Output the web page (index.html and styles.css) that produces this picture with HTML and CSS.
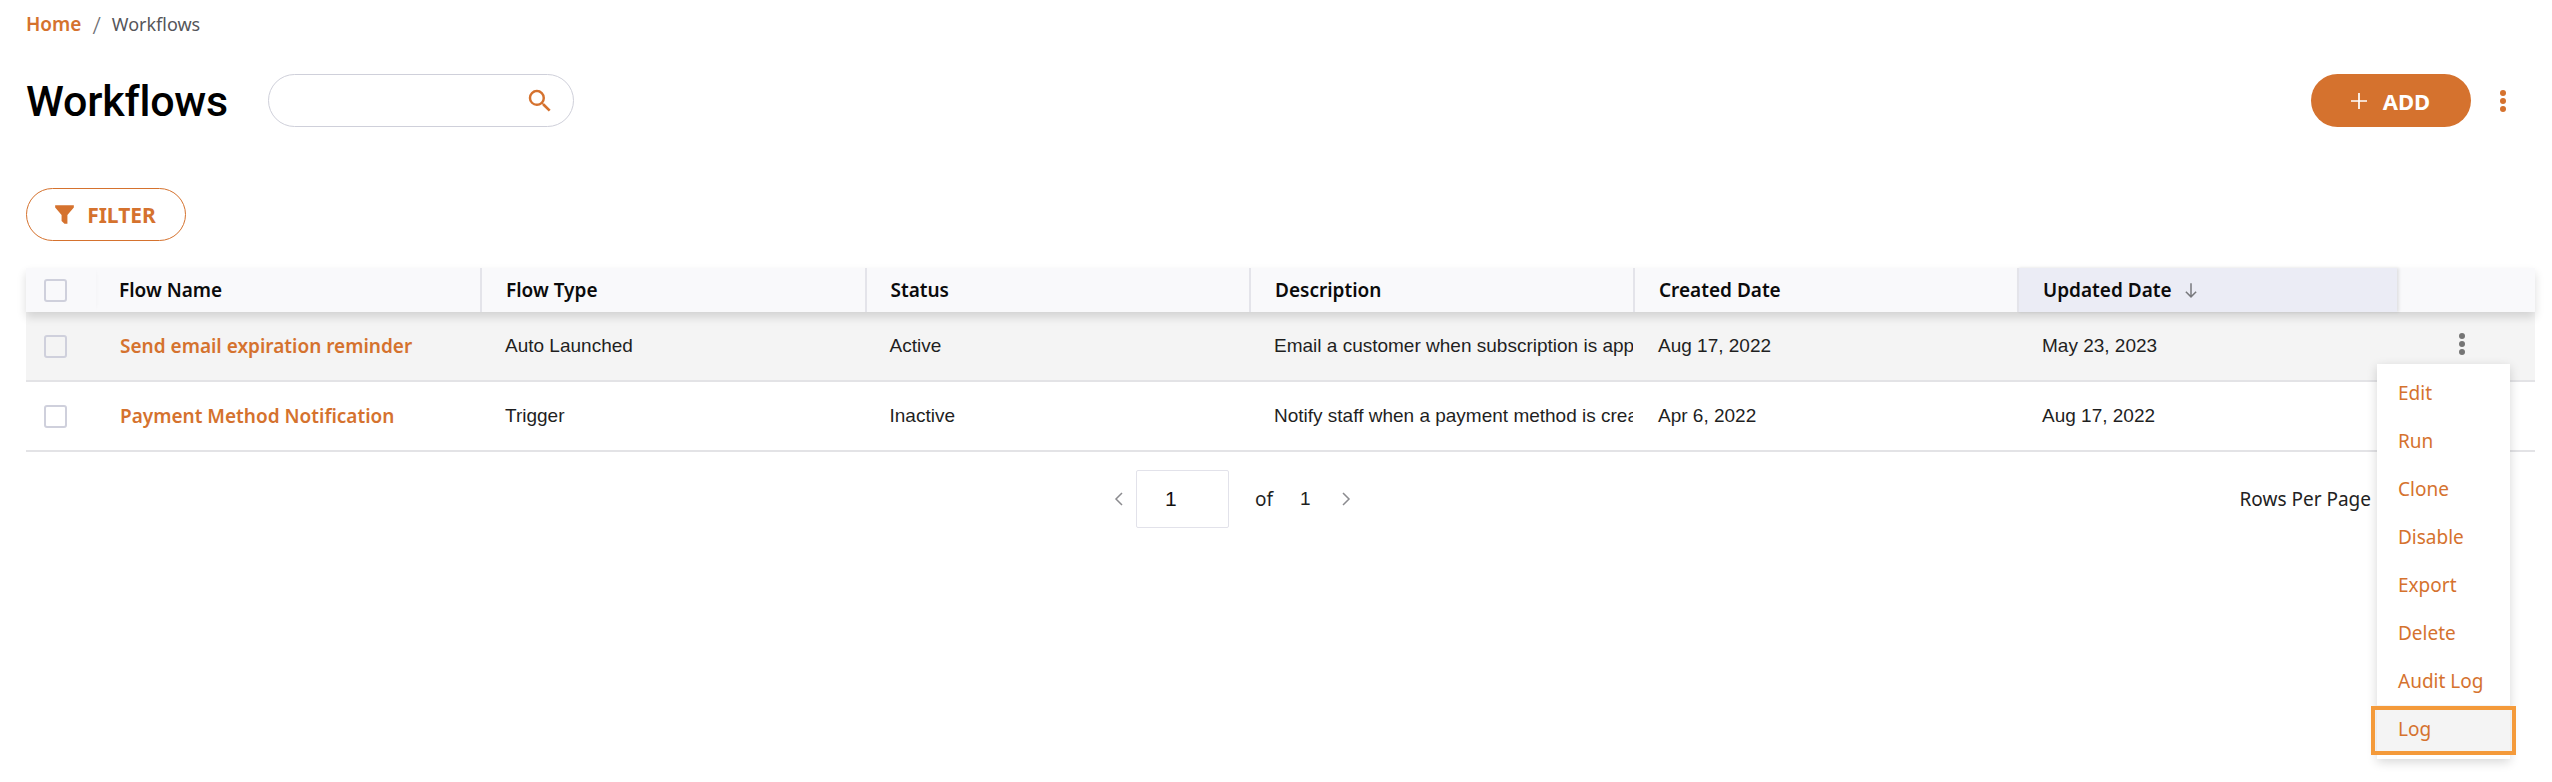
FILE: index.html
```html
<!DOCTYPE html>
<html lang="en">
<head>
<meta charset="utf-8">
<title>Workflows</title>
<link rel="stylesheet" href="styles.css">
</head>
<body>
<main class="page">
  <nav class="crumbs"><a class="crumb-home">Home</a><span class="crumb-sep">/</span><span class="crumb-cur">Workflows</span></nav>
  <header class="titlebar">
    <h1 class="title">Workflows</h1>
    <div class="search">
      <svg class="search-icon" viewBox="0 0 24 24"><path d="M15.5 14h-.79l-.28-.27A6.47 6.47 0 0 0 16 9.5 6.5 6.5 0 1 0 9.5 16c1.61 0 3.09-.59 4.23-1.57l.27.28v.79l5 4.99L20.49 19l-4.99-5zm-6 0C7.01 14 5 11.99 5 9.5S7.01 5 9.5 5 14 7.01 14 9.5 11.99 14 9.5 14z"/></svg>
    </div>
    <div class="spacer"></div>
    <button class="add-btn"><svg class="plus" viewBox="0 0 18 18"><path d="M9 1v16M1 9h16"/></svg><span>ADD</span></button>
    <div class="kebab kebab-top"><i></i><i></i><i></i></div>
  </header>
  <button class="filter-btn"><svg class="funnel" viewBox="0 0 18 18"><path d="M1 1h16v2l-5.500 6.500V17H9l-2.500-2.500V9.500L1 3z"/></svg><span>FILTER</span></button>

  <section class="table">
    <div class="row head">
      <div class="cell check sticky"><span class="box"></span></div>
      <div class="cell name">Flow Name</div>
      <div class="cell col sep">Flow Type</div>
      <div class="cell col sep">Status</div>
      <div class="cell col sep">Description</div>
      <div class="cell col sep">Created Date</div>
      <div class="cell col sep sorted">Updated Date<svg class="arrow" viewBox="0 0 14 14"><path d="M7 1v12M2.500 8.500 7 13l4.500-4.500"/></svg></div>
      <div class="cell act"></div>
    </div>
    <div class="row body hover">
      <div class="cell check"><span class="box"></span></div>
      <div class="cell name link">Send email expiration reminder</div>
      <div class="cell col">Auto Launched</div>
      <div class="cell col">Active</div>
      <div class="cell col desc"><span>Email a customer when subscription is appr</span></div>
      <div class="cell col">Aug 17, 2022</div>
      <div class="cell col">May 23, 2023</div>
      <div class="cell act"><div class="kebab kebab-row"><i></i><i></i><i></i></div></div>
    </div>
    <div class="row body">
      <div class="cell check"><span class="box"></span></div>
      <div class="cell name link">Payment Method Notification</div>
      <div class="cell col">Trigger</div>
      <div class="cell col">Inactive</div>
      <div class="cell col desc"><span>Notify staff when a payment method is crea</span></div>
      <div class="cell col">Apr 6, 2022</div>
      <div class="cell col">Aug 17, 2022</div>
      <div class="cell act"></div>
    </div>

    <ul class="menu">
      <li>Edit</li><li>Run</li><li>Clone</li><li>Disable</li><li>Export</li><li>Delete</li><li>Audit Log</li><li class="menu-log">Log</li>
    </ul>
  </section>

  <footer class="pager">
    <div class="pages">
      <svg class="chev" viewBox="0 0 10 16"><path d="M8 2 2 8l6 6"/></svg>
      <div class="page-input">1</div>
      <span class="of">of</span>
      <span class="total">1</span>
      <svg class="chev" viewBox="0 0 10 16"><path d="m2 2 6 6-6 6"/></svg>
    </div>
    <div class="rows-per">Rows Per Page</div>
  </footer>
</main>
</body>
</html>
```
FILE: styles.css
```css
* { box-sizing: border-box; }
html, body { margin: 0; padding: 0; background: #fff; }
body { font-family: "Liberation Sans", Arial, sans-serif; overflow: hidden; height: 782px; }
.page { padding: 0 17px 0 26px; }

.crumbs { display: flex; align-items: center; height: 24px; margin-top: 12px; font-family: "Noto Sans", sans-serif; font-size: 18px; }
.crumb-home { color: #d5722e; font-weight: 600; font-size: 19px; }
.crumb-sep { color: #6d6e72; margin: 0 11px; font-size: 24px; font-weight: 300; }
.crumb-cur { color: #55565a; }

.titlebar { display: flex; align-items: center; height: 53px; margin-top: 38px; }
.title { margin: 0; width: 242px; font-family: Roboto, sans-serif; font-weight: 500; font-size: 43px; color: #000; letter-spacing: -0.2px; }
.search { width: 306px; height: 53px; border: 1px solid #cfd0da; border-radius: 27px; display: flex; align-items: center; justify-content: flex-end; padding-right: 18px; }
.search-icon { width: 30px; height: 30px; fill: #d5722e; }
.spacer { flex: 1; }
.add-btn { width: 160px; height: 53px; border: 0; border-radius: 27px; background: #d5722e; color: #fff; display: flex; align-items: center; justify-content: center; gap: 15px; font-family: "Noto Sans", sans-serif; font-weight: 700; font-size: 22px; padding: 0 2px 0 0; }
.plus { width: 18px; height: 18px; fill: none; stroke: #fff; stroke-width: 1.7; }
.kebab { display: flex; flex-direction: column; gap: 2px; }
.kebab i { display: block; width: 6px; height: 6px; border-radius: 50%; }
.kebab-top { margin-left: 29px; margin-right: 29px; }
.kebab-top i { background: #d5722e; }
.kebab-row i { background: #757575; }

.filter-btn { display: flex; align-items: center; justify-content: center; gap: 12px; width: 160px; height: 53px; margin-top: 61px; border: 1px solid #d5722e; border-radius: 27px; background: #fff; color: #d5722e; font-family: "Noto Sans", sans-serif; font-weight: 700; font-size: 21px; padding: 0 2px 0 0; }
.funnel { width: 21px; height: 21px; fill: #d5722e; }

.table { position: relative; margin-top: 27px; }
.row { display: grid; grid-template-columns: 70px 384px 384.5px 384.5px 384px 384px 380px 140px; align-items: center; }
.cell { display: flex; align-items: center; height: 100%; min-width: 0; }
.head { height: 44px; background: #f9f9fb; font-family: "Noto Sans", sans-serif; font-weight: 600; font-size: 19px; color: #0b0b0b; box-shadow: 0 5px 9px rgba(0,0,0,.14); position: relative; z-index: 1; }
.check { justify-content: center; padding-right: 11px; }
.sticky { box-shadow: 3px 0 5px -4px rgba(0,0,0,.05); }
.box { display: block; width: 23px; height: 23px; border: 2px solid #cfd0dc; border-radius: 3px; background: transparent; }
.name { padding-left: 23px; }
.col { padding-left: 25px; }
.sep { border-left: 2px solid #e4e4ea; padding-left: 24px; }
.sorted { background: #ebecf5; box-shadow: 2px 0 3px rgba(0,0,0,.1); gap: 11px; }
.arrow { width: 16px; height: 16px; fill: none; stroke: #77787c; stroke-width: 1.3; }
.body { height: 70px; border-bottom: 2px solid #e3e3e6; font-size: 19px; color: #1f1f1f; }
.hover { background: #f4f4f4; }
.link { font-family: "Noto Sans", sans-serif; font-weight: 600; color: #d5722e; padding-left: 24px; }
.desc { overflow: hidden; }
.desc span { white-space: nowrap; overflow: hidden; }
.act { justify-content: center; padding-left: 0; }
.kebab-row { margin-right: 11px; margin-top: -4px; }

.menu { position: absolute; z-index: 2; right: 0; top: 96px; margin: 0 25px 0 0; padding: 5px 0 0; list-style: none; width: 133px; height: 395px; background: #fff; box-shadow: 0 3px 10px rgba(0,0,0,.16); font-family: "Noto Sans", sans-serif; font-size: 19px; color: #d5722e; }
.menu li { height: 48px; display: flex; align-items: center; padding-left: 21px; }
.menu-log { background: #f4f4f4; position: relative; }
.menu-log::after { content: ""; position: absolute; left: -6px; right: -6px; top: 1px; bottom: -2px; border: 4px solid #f49a3a; }

.pager { display: flex; align-items: center; justify-content: space-between; height: 58px; margin-top: 18px; font-size: 19px; color: #1f1f1f; padding-left: 1088px; padding-right: 0; }
.pages { display: flex; align-items: center; }
.chev { width: 10px; height: 16px; fill: none; stroke: #8b8b8f; stroke-width: 1.5; }
.page-input { width: 93px; height: 58px; margin: 0 0 0 12px; border: 1px solid #e2e2ea; border-radius: 2px; padding-left: 28px; display: flex; align-items: center; font-size: 21px; color: #111; }
.of { margin-left: 26px; font-family: "Noto Sans", sans-serif; }
.total { margin-left: 27px; margin-right: 30px; }
.rows-per { font-family: "Noto Sans", sans-serif; color: #222; margin-right: 164px; }
```
